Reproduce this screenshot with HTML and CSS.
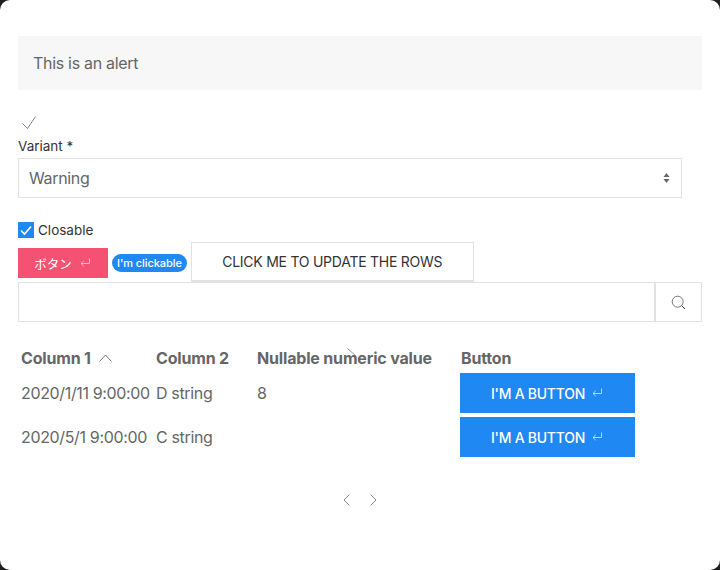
FILE: index.html
```html
<!DOCTYPE html>
<html lang="en">
<head>
<meta charset="utf-8">
<title>Alert</title>
<link rel="stylesheet" href="styles.css">
</head>
<body>
<main class="card">
  <div class="alert">This is an alert</div>
  <svg class="check" width="16" height="16" viewBox="0 0 16 16"><path d="M1.5 8.5 L6.5 13.5 L14.5 1.5" fill="none" stroke="#666" stroke-width="0.8"/></svg>
  <div class="label">Variant *</div>
  <div class="select">
    <span>Warning</span>
    <svg width="7" height="12" viewBox="0 0 7 12"><path d="M3.5 1 L6.5 5 H0.5 Z M0.5 7 H6.5 L3.5 11 Z" fill="#666"/></svg>
  </div>
  <label class="closable">
    <span class="box"><svg width="16" height="16" viewBox="0 0 16 16"><path d="M3 8.5 L6.5 12 L13 4.5" fill="none" stroke="#fff" stroke-width="1.6"/></svg></span>
    Closable
  </label>
  <div class="actions">
    <div class="btn-pink">ボタン<svg class="enter" width="10" height="10" viewBox="0 0 10 10"><path d="M9.5 0.5 V5.5 H1 M3.8 2.8 L1 5.5 L3.8 8.2" fill="none" stroke="#fff" stroke-opacity=".75" stroke-width="0.8"/></svg></div>
    <div class="pill">I'm clickable</div>
    <div class="btn-outline">CLICK ME TO UPDATE THE ROWS</div>
  </div>
  <div class="search">
    <div class="search-input"></div>
    <div class="search-btn"><svg width="15" height="15" viewBox="0 0 15 15"><circle cx="6.7" cy="6.7" r="5.5" fill="none" stroke="#666" stroke-width="0.9"/><path d="M10.6 10.6 L14 14" stroke="#333" stroke-width="1"/></svg></div>
  </div>
  <div class="table">
    <div class="th">Column 1<svg class="sort" width="13" height="8" viewBox="0 0 13 8"><path d="M0.5 7.5 L6.5 1 L12.5 7.5" fill="none" stroke="#666" stroke-width="0.9"/></svg></div>
    <div class="th">Column 2</div>
    <div class="th th-null">Nullable numeric value<svg class="stray" width="10" height="9" viewBox="0 0 10 9"><path d="M0.5 0.5 L9 8" fill="none" stroke="#888" stroke-width="0.9"/></svg></div>
    <div class="th">Button</div>
    <div class="td">2020/1/11 9:00:00</div>
    <div class="td">D string</div>
    <div class="td">8</div>
    <div class="btn-blue">I'M A BUTTON<svg class="enter" width="10" height="10" viewBox="0 0 10 10"><path d="M9.5 0.5 V5.5 H1 M3.8 2.8 L1 5.5 L3.8 8.2" fill="none" stroke="#fff" stroke-opacity=".8" stroke-width="0.8"/></svg></div>
    <div class="td">2020/5/1 9:00:00</div>
    <div class="td">C string</div>
    <div class="td"></div>
    <div class="btn-blue">I'M A BUTTON<svg class="enter" width="10" height="10" viewBox="0 0 10 10"><path d="M9.5 0.5 V5.5 H1 M3.8 2.8 L1 5.5 L3.8 8.2" fill="none" stroke="#fff" stroke-opacity=".8" stroke-width="0.8"/></svg></div>
  </div>
  <div class="pager">
    <svg width="7" height="12" viewBox="0 0 7 12"><path d="M6.5 0.5 L1 6 L6.5 11.5" fill="none" stroke="#777" stroke-width="0.9"/></svg>
    <svg width="7" height="12" viewBox="0 0 7 12"><path d="M0.5 0.5 L6 6 L0.5 11.5" fill="none" stroke="#777" stroke-width="0.9"/></svg>
  </div>
</main>
</body>
</html>
```
FILE: styles.css
```css
* { box-sizing: border-box; }
html, body { margin: 0; height: 100%; }
body { background: #1f1f1f; font-family: Inter, "Noto Sans CJK JP", sans-serif; color: #666; overflow: hidden; }
.card { width: 720px; height: 570px; background: #fff; border-radius: 10px; padding: 36px 18px 0; }
.alert { height: 54px; background: #f7f7f7; padding: 0 15px; display: flex; align-items: center; font-size: 16px; letter-spacing: -0.3px; }
.check { display: block; margin: 25px 0 0 3px; }
.label { font-size: 13.5px; line-height: 16px; color: #333; margin-top: 7px; }
.select { width: 664px; height: 40px; margin-top: 4px; border: 1px solid #e2e2e2; padding: 0 11px 0 10px; display: flex; align-items: center; justify-content: space-between; font-size: 16px; letter-spacing: -0.35px; }
.closable { display: flex; align-items: center; gap: 4px; margin-top: 24px; height: 16px; font-size: 13.5px; color: #333; }
.box { width: 16px; height: 16px; background: #2088f2; display: block; }
.box svg { display: block; }
.actions { display: flex; align-items: flex-end; height: 42px; margin-top: 2px; }
.btn-pink { width: 90px; height: 30px; margin-bottom: 4px; background: #f55273; color: #fff; font-size: 12.5px; display: flex; align-items: center; justify-content: center; gap: 8px; padding-right: 2px; }
.pill { height: 18px; margin: 0 4px 10px; padding: 0 5px; border-radius: 9px; background: #2088f2; color: #fff; font-size: 11px; font-weight: 500; line-height: 18px; letter-spacing: -0.08px; }
.btn-outline { width: 283px; height: 40px; border: 1px solid #e2e2e2; border-bottom-width: 2px; display: flex; align-items: center; justify-content: center; font-size: 14px; letter-spacing: -0.25px; color: #333; }
.search { display: flex; width: 684px; height: 40px; }
.search-input { flex: 1; border: 1px solid #e2e2e2; }
.search-btn { width: 47px; border: 1px solid #e2e2e2; display: flex; align-items: center; justify-content: center; }
.table { display: grid; grid-template-columns: 135px 101px 204px 175px; grid-template-rows: 25px 44px 44px; margin: 24px 0 0 3px; font-size: 16px; letter-spacing: -0.35px; }
.th { font-weight: 700; font-size: 16px; letter-spacing: -0.17px; color: #666; height: 24px; display: flex; align-items: center; position: relative; align-self: start; }
.td { display: flex; align-items: center; white-space: nowrap; }
.sort { margin-left: 8px; }
.stray { position: absolute; left: 90px; top: 2px; }
.btn-blue { width: 175px; height: 40px; background: #2088f2; color: #fff; font-size: 14px; font-weight: 500; letter-spacing: -0.25px; display: flex; align-items: center; justify-content: center; gap: 7px; padding-right: 2px; align-self: center; margin-left: -1px; }
.pager { display: flex; justify-content: center; gap: 20px; margin-top: 35px; }
.enter { display: block; }
```
